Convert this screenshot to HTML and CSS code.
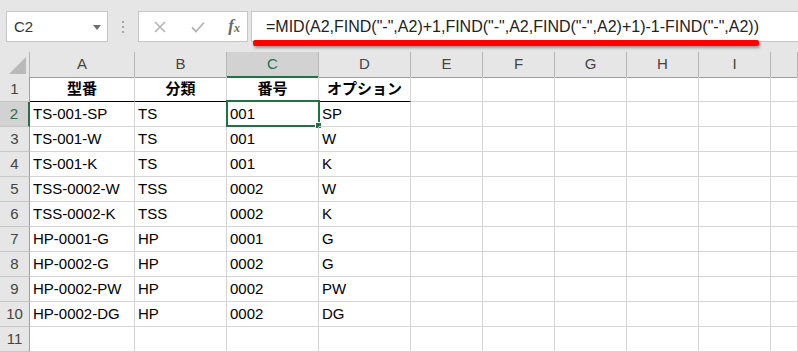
FILE: index.html
```html
<!DOCTYPE html>
<html lang="ja">
<head>
    <meta charset="UTF-8">
    <title>Book1 - Excel</title>
    <link rel="stylesheet" href="styles.css">
</head>
<body>

<div class="topbar">
    <div class="namebox">
        <span>C2</span>
        <span class="caret"></span>
    </div>
    <div class="grip"><i></i><i></i><i></i></div>
    <div class="fbuttons">
        <svg width="14" height="14" viewBox="0 0 14 14"><path d="M2 2 L12 12 M12 2 L2 12" stroke="#b4b4b4" stroke-width="1.6" fill="none"/></svg>
        <svg width="16" height="14" viewBox="0 0 16 14"><path d="M2 7.5 L6 11.5 L14 2.5" stroke="#b4b4b4" stroke-width="1.8" fill="none"/></svg>
        <span class="fx">f<sub>x</sub></span>
    </div>
    <div class="formula">
        <span class="ftext">=MID(A2,FIND("-",A2)+1,FIND("-",A2,FIND("-",A2)+1)-1-FIND("-",A2))</span>
        <span class="redline"></span>
    </div>
</div>

<div class="sheet">
    <div class="row head">
        <div class="corner"><span></span></div>
        <div>A</div><div>B</div><div class="sel">C</div><div>D</div><div>E</div>
        <div>F</div><div>G</div><div>H</div><div>I</div><div></div>
    </div>
    <div class="row titles">
        <div class="rn">1</div>
        <div class="t">型番</div><div class="t">分類</div><div class="t">番号</div><div class="t">オプション</div>
        <div></div><div></div><div></div><div></div><div></div><div></div>
    </div>
    <div class="row">
        <div class="rn sel">2</div>
        <div>TS-001-SP</div><div>TS</div><div class="active">001<span class="cursor"><i></i></span></div><div>SP</div>
        <div></div><div></div><div></div><div></div><div></div><div></div>
    </div>
    <div class="row">
        <div class="rn">3</div>
        <div>TS-001-W</div><div>TS</div><div>001</div><div>W</div>
        <div></div><div></div><div></div><div></div><div></div><div></div>
    </div>
    <div class="row">
        <div class="rn">4</div>
        <div>TS-001-K</div><div>TS</div><div>001</div><div>K</div>
        <div></div><div></div><div></div><div></div><div></div><div></div>
    </div>
    <div class="row">
        <div class="rn">5</div>
        <div>TSS-0002-W</div><div>TSS</div><div>0002</div><div>W</div>
        <div></div><div></div><div></div><div></div><div></div><div></div>
    </div>
    <div class="row">
        <div class="rn">6</div>
        <div>TSS-0002-K</div><div>TSS</div><div>0002</div><div>K</div>
        <div></div><div></div><div></div><div></div><div></div><div></div>
    </div>
    <div class="row">
        <div class="rn">7</div>
        <div>HP-0001-G</div><div>HP</div><div>0001</div><div>G</div>
        <div></div><div></div><div></div><div></div><div></div><div></div>
    </div>
    <div class="row">
        <div class="rn">8</div>
        <div>HP-0002-G</div><div>HP</div><div>0002</div><div>G</div>
        <div></div><div></div><div></div><div></div><div></div><div></div>
    </div>
    <div class="row">
        <div class="rn">9</div>
        <div>HP-0002-PW</div><div>HP</div><div>0002</div><div>PW</div>
        <div></div><div></div><div></div><div></div><div></div><div></div>
    </div>
    <div class="row">
        <div class="rn">10</div>
        <div>HP-0002-DG</div><div>HP</div><div>0002</div><div>DG</div>
        <div></div><div></div><div></div><div></div><div></div><div></div>
    </div>
    <div class="row">
        <div class="rn">11</div>
        <div></div><div></div><div></div><div></div>
        <div></div><div></div><div></div><div></div><div></div><div></div>
    </div>
</div>

</body>
</html>
```

FILE: styles.css
```css
body {
    margin: 0;
    width: 798px;
    height: 352px;
    overflow: hidden;
    background-color: #fff;
    font-family: "Liberation Sans", "Noto Sans CJK JP", sans-serif;
    color: #000;
}
.topbar {
    height: 52px;
    box-sizing: border-box;
    background-color: #e6e6e6;
    display: flex;
    align-items: flex-start;
    padding-top: 11px;
}
.namebox, .fbuttons, .formula {
    height: 31px;
    box-sizing: border-box;
    background-color: #fff;
    border: 1px solid #c6c6c6;
}
.namebox {
    margin-left: 6px;
    width: 102px;
    display: flex;
    align-items: center;
    justify-content: space-between;
    padding: 0 6px 0 7px;
    font-size: 15px;
    color: #333;
}
.caret {
    width: 0;
    height: 0;
    border-left: 4px solid transparent;
    border-right: 4px solid transparent;
    border-top: 5px solid #6f6f6f;
    margin-top: 1px;
}
.grip {
    width: 30px;
    height: 31px;
    display: flex;
    flex-direction: column;
    align-items: center;
    justify-content: center;
    gap: 3px;
}
.grip i {
    width: 2px;
    height: 2px;
    background-color: #a6a6a6;
}
.fbuttons {
    width: 110px;
    display: flex;
    align-items: center;
    padding: 0 7px 0 14px;
    justify-content: space-between;
}
.fx {
    font-family: "Liberation Serif", serif;
    font-style: italic;
    font-weight: bold;
    font-size: 17px;
    line-height: 20px;
    color: #6a6a6a;
}
.fx sub {
    font-size: 12px;
    vertical-align: -1px;
}
.formula {
    position: relative;
    margin-left: 3px;
    flex: 1;
    border-right: none;
    padding-left: 14px;
    font-size: 16px;
    line-height: 30px;
    color: #222;
}
.redline {
    position: absolute;
    left: 1px;
    top: 28px;
    width: 506px;
    height: 6px;
    border-radius: 2px;
    background-color: #ff0000;
    box-shadow: 1px 2px 3px rgba(0, 0, 0, 0.35);
}
.row {
    display: grid;
    grid-template-columns: 30px 105px 92px 92px 92px 72px 72px 72px 72px 72px 1fr;
    height: 25px;
}
.row > div {
    position: relative;
    box-sizing: border-box;
    border-right: 1px solid #d4d4d4;
    border-bottom: 1px solid #d4d4d4;
    font-size: 15px;
    line-height: 24px;
    padding-left: 3px;
    white-space: nowrap;
}
.head > div {
    background-color: #e6e6e6;
    border-right-color: #b6b6b6;
    border-bottom-color: #9e9e9e;
    text-align: center;
    padding-left: 0;
    color: #444;
}
.head .sel {
    background-color: #d2d2d2;
    color: #217346;
    border-bottom: 2px solid #217346;
}
.corner span {
    position: absolute;
    right: 3px;
    bottom: 3px;
    width: 0;
    height: 0;
    border-left: 17px solid transparent;
    border-bottom: 17px solid #b9b9b9;
}
.row > .rn {
    background-color: #e6e6e6;
    border-right-color: #9e9e9e;
    border-bottom-color: #c6c6c6;
    text-align: center;
    padding-left: 0;
    color: #444;
}
.row > .rn.sel {
    background-color: #d2d2d2;
    color: #217346;
    border-right: 2px solid #217346;
}
.titles .t {
    font-weight: bold;
    text-align: center;
    padding-left: 0;
    border-bottom-color: #000;
}
.cursor {
    position: absolute;
    left: -1px;
    top: -2px;
    right: -2px;
    bottom: -1px;
    border: 2px solid #217346;
}
.cursor i {
    position: absolute;
    right: -4px;
    bottom: -4px;
    width: 5px;
    height: 5px;
    background-color: #217346;
    border: 1px solid #fff;
}
```
